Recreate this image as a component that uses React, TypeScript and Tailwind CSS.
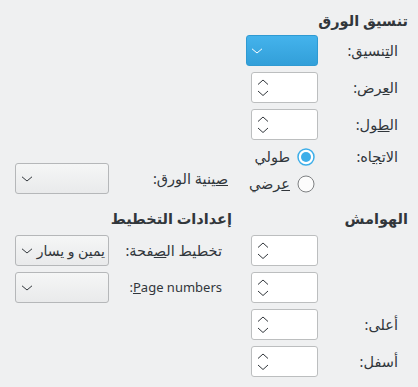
import React from "react";

const font = { fontFamily: '"Noto Sans", "DejaVu Sans", sans-serif' };

function SpinBox() {
  return (
    <div className="flex h-[31px] w-[67px] items-center rounded-[3px] border border-[#bcbebf] bg-white" dir="ltr">
      <svg width="12" height="17" viewBox="0 0 12 17" className="ml-[5px]" fill="none" stroke="#31363b" strokeWidth="1">
        <path d="M1 5.5 L6 1 L11 5.5" />
        <path d="M1 12 L6 16.5 L11 12" />
      </svg>
    </div>
  );
}

function Chevron({ color }: { color: string }) {
  return (
    <svg width="12" height="6" viewBox="0 0 12 6" fill="none" stroke={color} strokeWidth="1">
      <path d="M1 0.8 L6 5 L11 0.8" />
    </svg>
  );
}

function Combo({ text }: { text?: string }) {
  return (
    <div
      className="flex h-[31px] w-[94px] shrink-0 items-center justify-between rounded-[3px] border border-[#b5b7b9] bg-gradient-to-b from-[#f5f6f6] to-[#e9eaeb] pl-[5px] pr-[3px]"
      dir="ltr"
    >
      <Chevron color="#31363b" />
      {text && (
        <span className="whitespace-nowrap text-[14px] text-[#31363b]" dir="rtl">
          {text}
        </span>
      )}
    </div>
  );
}

function Radio({ checked }: { checked?: boolean }) {
  return checked ? (
    <svg width="18" height="18" viewBox="0 0 18 18">
      <circle cx="9" cy="9" r="8" fill="#ffffff" stroke="#3daee9" strokeWidth="1.5" />
      <circle cx="9" cy="9" r="5" fill="#3daee9" />
    </svg>
  ) : (
    <svg width="18" height="18" viewBox="0 0 18 18">
      <circle cx="9" cy="9" r="8" fill="#fcfcfc" stroke="#7f8183" strokeWidth="1" />
    </svg>
  );
}

function Label({ children }: { children: React.ReactNode }) {
  return <div className="w-[90px] shrink-0 pr-[10px] text-[14.5px] text-[#31363b]">{children}</div>;
}

export default function App() {
  return (
    <div dir="rtl" style={font} className="h-[387px] w-[418px] bg-[#eff0f1] pr-[10px] text-[14.5px] text-[#31363b]">
      {/* Paper format */}
      <div className="pt-[10px] font-bold leading-[20px]">تنسيق الورق</div>

      <div className="mt-[5px] flex items-center">
        <Label>
          ال<u>ت</u>نسيق:
        </Label>
        <div
          className="flex h-[31px] w-[72px] items-center rounded-[3px] border border-[#2f9ad2] bg-gradient-to-b from-[#44b3ec] to-[#329fd9] pl-[4px]"
          dir="ltr"
        >
          <Chevron color="#ffffff" />
        </div>
      </div>

      <div className="mt-[6px] flex items-center">
        <Label>
          ال<u>ع</u>رض:
        </Label>
        <SpinBox />
      </div>

      <div className="mt-[6px] flex items-center">
        <Label>
          ال<u>ط</u>ول:
        </Label>
        <SpinBox />
      </div>

      <div className="mt-[8px] flex">
        <div className="w-[168px]">
          <div className="flex h-[18px] items-center">
            <Label>
              الات<u>ج</u>اه:
            </Label>
            <div className="mr-[3px] flex items-center gap-[7px]">
              <Radio checked />
              <span>طولي</span>
            </div>
          </div>
          <div className="mt-[9px] flex h-[18px] items-center">
            <Label>{""}</Label>
            <div className="mr-[3px] flex items-center gap-[7px]">
              <Radio />
              <span>
                <u>ع</u>رضي
              </span>
            </div>
          </div>
        </div>
        <div className="mt-[15px] flex flex-1 items-center justify-between pl-[15px] pr-[12px]">
          <span>
            <u>ص</u>ينية الورق:
          </span>
          <Combo />
        </div>
      </div>

      {/* Margins and layout */}
      <div className="mt-[14px] flex">
        <div className="w-[168px]">
          <div className="font-bold leading-[20px]">الهوامش</div>
          <div className="mt-[7px] flex items-center">
            <Label>{""}</Label>
            <SpinBox />
          </div>
          <div className="mt-[6px] flex items-center">
            <Label>{""}</Label>
            <SpinBox />
          </div>
          <div className="mt-[6px] flex items-center">
            <Label>أعلى:</Label>
            <SpinBox />
          </div>
          <div className="mt-[6px] flex items-center">
            <Label>أسفل:</Label>
            <SpinBox />
          </div>
        </div>

        <div className="flex-1 pr-[8px]">
          <div className="font-bold leading-[20px]">إعدادات التخطيط</div>
          <div className="mt-[7px] flex items-center justify-between pl-[15px] pr-[10px]">
            <span>
              تخطيط ال<u>ص</u>فحة:
            </span>
            <Combo text="يمين و يسار" />
          </div>
          <div className="mt-[6px] flex items-center justify-between pl-[15px] pr-[10px]">
            <span className="text-[13px]">
              <u>P</u>age numbers:
            </span>
            <Combo />
          </div>
        </div>
      </div>
    </div>
  );
}
